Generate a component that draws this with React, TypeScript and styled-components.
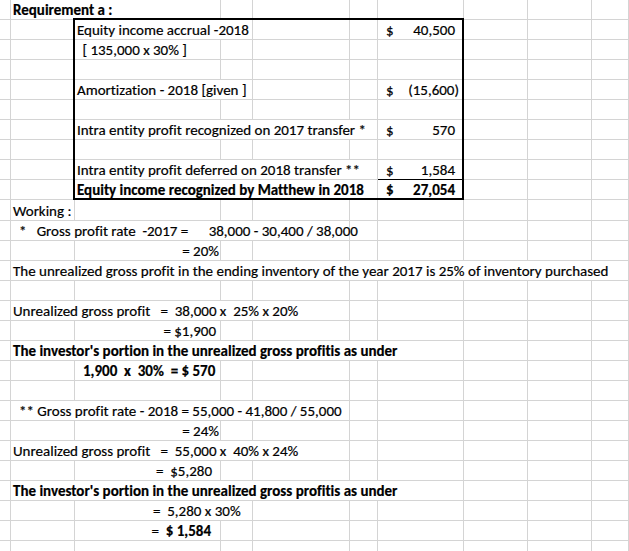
import React from "react";
import styled, { createGlobalStyle } from "styled-components";

const GlobalStyle = createGlobalStyle`
  html, body { margin: 0; padding: 0; background: #ffffff; overflow: hidden; }
  body { font-family: Carlito, Lato, sans-serif; }
`;

const GRID = "#d4d4d4";
const COLS = 10;
const ROWS = 28;

const Sheet = styled.div`
  display: grid;
  grid-template-columns: 11px 64px 146px 32px 97px 28px 86px 64px 64px 1fr;
  grid-template-rows: repeat(10, 20px) 21px repeat(17, 20px);
  width: 629px;
  height: 551px;
  overflow: hidden;
  font-family: Carlito, Lato, sans-serif;
  font-size: 15px;
  font-variant-ligatures: none;
  font-feature-settings: "liga" 0, "clig" 0;
  -webkit-text-stroke: 0.2px #000000;
  color: #000000;
  background: #ffffff;
`;

type CellProps = {
  $row: number;
  $col: number;
  $span: number;
  $bold?: boolean;
  $indent: number;
  $padRight: number;
  $align: "left" | "right" | "split";
  $underline?: boolean;
};

const Cell = styled.div<CellProps>`
  grid-row: ${(p) => p.$row + 1};
  grid-column: ${(p) => p.$col + 1} / span ${(p) => p.$span};
  box-sizing: border-box;
  border-right: 1px solid ${GRID};
  border-bottom: 1px solid ${(p) => (p.$underline ? "#000000" : GRID)};
  display: flex;
  align-items: flex-end;
  justify-content: ${(p) =>
    p.$align === "right" ? "flex-end" : p.$align === "split" ? "space-between" : "flex-start"};
  padding: 0 ${(p) => p.$padRight}px 1px ${(p) => p.$indent}px;
  white-space: pre;
  font-weight: ${(p) => (p.$bold ? 700 : 400)};
  line-height: 16px;
  min-width: 0;
`;

const Strong = styled.span`
  font-weight: 700;
`;

const Frame = styled.div`
  grid-row: 2 / 11;
  grid-column: 3 / 8;
  margin: -2px 0 0 -2px;
  border: 2px solid #000000;
  pointer-events: none;
  z-index: 1;
`;

type Seg = {
  col: number;
  span?: number;
  text?: React.ReactNode;
  bold?: boolean;
  indent?: number;
  padRight?: number;
  align?: "left" | "right" | "split";
  underline?: boolean;
  money?: [string, string];
};

const B = 1;
const C = 2;
const G = 6;

const investor = "The investor's portion in the unrealized gross profitis as under";

const DATA: Record<number, Seg[]> = {
  0: [{ col: B, span: 2, text: "Requirement a :", bold: true }],
  1: [
    { col: C, span: 2, text: "Equity income accrual -2018" },
    { col: G, money: ["$", "40,500"], padRight: 8 },
  ],
  2: [{ col: C, text: " [ 135,000 x 30% ]", indent: 4 }],
  4: [
    { col: C, span: 2, text: "Amortization - 2018 [given ]" },
    { col: G, money: ["$", "(15,600)"], padRight: 4 },
  ],
  6: [
    { col: C, span: 4, text: "Intra entity profit recognized on 2017 transfer *" },
    { col: G, money: ["$", "570"], padRight: 8 },
  ],
  8: [
    { col: C, span: 4, text: "Intra entity profit deferred on 2018 transfer **" },
    { col: G, money: ["$", "1,584"], padRight: 8, underline: true },
  ],
  9: [
    { col: C, span: 4, text: "Equity income recognized by Matthew in 2018", bold: true },
    { col: G, money: ["$", "27,054"], padRight: 8, bold: true },
  ],
  10: [{ col: B, text: "Working :" }],
  11: [{ col: B, span: 4, text: "*   Gross profit rate  -2017 =      38,000 - 30,400 / 38,000", indent: 8 }],
  12: [{ col: C, text: "= 20%", align: "right", padRight: 1 }],
  13: [
    {
      col: B,
      span: 9,
      text: "The unrealized gross profit in the ending inventory of the year 2017 is 25% of inventory purchased",
    },
  ],
  15: [{ col: B, span: 4, text: "Unrealized gross profit   =  38,000 x  25% x 20%" }],
  16: [{ col: C, text: "= $1,900", align: "right", padRight: 4 }],
  17: [{ col: B, span: 6, text: investor, bold: true }],
  18: [{ col: C, text: "1,900  x  30%  = $ 570", bold: true, indent: 8 }],
  20: [{ col: B, span: 4, text: "** Gross profit rate - 2018 = 55,000 - 41,800 / 55,000", indent: 8 }],
  21: [{ col: C, text: "= 24%", align: "right", padRight: 1 }],
  22: [{ col: B, span: 4, text: "Unrealized gross profit   =  55,000 x  40% x 24%" }],
  23: [{ col: C, text: "=  $5,280", align: "right", padRight: 8 }],
  24: [{ col: B, span: 6, text: investor, bold: true }],
  25: [{ col: C, span: 2, text: "=  5,280 x 30%", indent: 78 }],
  26: [
    {
      col: C,
      text: (
        <>
          {"=  "}
          <Strong>$ 1,584</Strong>
        </>
      ),
      align: "right",
      padRight: 9,
    },
  ],
};

function buildRow(row: number) {
  const segs = DATA[row] ?? [];
  const out: React.ReactNode[] = [];
  let col = 0;
  while (col < COLS) {
    const seg = segs.find((s) => s.col === col);
    if (seg) {
      const span = seg.span ?? 1;
      const isMoney = !!seg.money;
      out.push(
        <Cell
          key={`${row}-${col}`}
          $row={row}
          $col={col}
          $span={span}
          $bold={seg.bold}
          $indent={isMoney ? 8 : seg.indent ?? 2}
          $padRight={seg.padRight ?? 2}
          $align={isMoney ? "split" : seg.align ?? "left"}
          $underline={seg.underline}
        >
          {isMoney ? (
            <>
              <span>{seg.money![0]}</span>
              <span>{seg.money![1]}</span>
            </>
          ) : (
            seg.text
          )}
        </Cell>
      );
      col += span;
    } else {
      out.push(
        <Cell key={`${row}-${col}`} $row={row} $col={col} $span={1} $indent={2} $padRight={2} $align="left" />
      );
      col += 1;
    }
  }
  return out;
}

export default function App() {
  const cells: React.ReactNode[] = [];
  for (let r = 0; r < ROWS; r++) cells.push(...buildRow(r));
  return (
    <>
      <GlobalStyle />
      <Sheet>
        {cells}
        <Frame />
      </Sheet>
    </>
  );
}
